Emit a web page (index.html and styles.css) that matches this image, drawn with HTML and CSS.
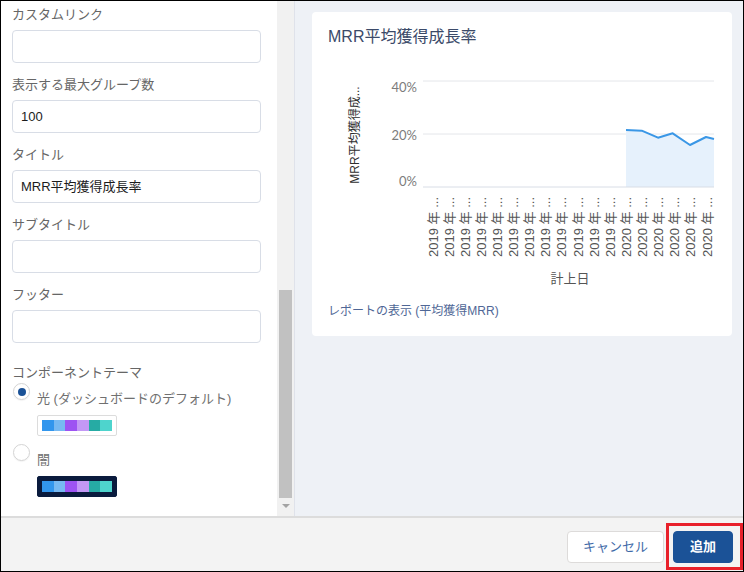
FILE: index.html
```html
<!DOCTYPE html>
<html lang="ja">
<head>
    <meta charset="UTF-8">
    <title>コンポーネントの編集</title>
    <link rel="stylesheet" href="styles.css">
</head>
<body>
<div class="frame">
    <div class="body">
        <div class="form">
            <div class="field">
                <div class="label">カスタムリンク</div>
                <div class="input"></div>
            </div>
            <div class="field">
                <div class="label">表示する最大グループ数</div>
                <div class="input">100</div>
            </div>
            <div class="field">
                <div class="label">タイトル</div>
                <div class="input">MRR平均獲得成長率</div>
            </div>
            <div class="field">
                <div class="label">サブタイトル</div>
                <div class="input"></div>
            </div>
            <div class="field">
                <div class="label">フッター</div>
                <div class="input"></div>
            </div>

            <div class="theme">
                <div class="label">コンポーネントテーマ</div>
                <div class="option">
                    <span class="radio checked"></span>
                    <div class="opt-body">
                        <div class="opt-name">光 (ダッシュボードのデフォルト)</div>
                        <div class="palette">
                            <span class="c1"></span><span class="c2"></span><span class="c3"></span>
                            <span class="c4"></span><span class="c5"></span><span class="c6"></span>
                        </div>
                    </div>
                </div>
                <div class="option">
                    <span class="radio"></span>
                    <div class="opt-body">
                        <div class="opt-name">闇</div>
                        <div class="palette dark">
                            <span class="c1"></span><span class="c2"></span><span class="c3"></span>
                            <span class="c4"></span><span class="c5"></span><span class="c6"></span>
                        </div>
                    </div>
                </div>
            </div>
        </div>

        <div class="scrollbar">
            <div class="thumb"></div>
            <div class="arrow"></div>
        </div>

        <div class="preview">
            <div class="card">
                <div class="card-title">MRR平均獲得成長率</div>
                <svg class="chart" width="420" height="240" viewBox="0 0 420 240">
                    <!-- grid -->
                    <line x1="111" y1="26" x2="402" y2="26" stroke="#e4e6ea"/>
                    <line x1="111" y1="79" x2="402" y2="79" stroke="#e4e6ea"/>

                    <!-- area -->
                    <polygon points="314,75 329.7,75.7 346,82.7 360.7,78.3 378,90 394,82 402,84 402,132 314,132" fill="#e6f1fc"/>
                    <polyline points="314,75 329.7,75.7 346,82.7 360.7,78.3 378,90 394,82 402,84" fill="none" stroke="#3a97e6" stroke-width="2" stroke-linejoin="round"/>

                    <line x1="111" y1="132" x2="402" y2="132" stroke="#d8dde6"/>

                    <g class="y-labels">
                        <text x="105" y="37">40%</text>
                        <text x="105" y="85">20%</text>
                        <text x="105" y="131">0%</text>
                    </g>
                    <text class="y-title" transform="translate(43,80) rotate(-90)">MRR平均獲得成...</text>

                    <g class="x-labels" id="xLabels"></g>
                    <text class="x-title" x="258" y="228">計上日</text>
                </svg>
                <div class="card-link">レポートの表示 (平均獲得MRR)</div>
            </div>
        </div>
    </div>

    <div class="footer">
        <div class="btn cancel">キャンセル</div>
        <div class="mark">
            <div class="btn add">追加</div>
        </div>
    </div>
</div>

<script>
    // x軸ラベル
    const group = document.querySelector('#xLabels');
    for (let i = 0; i < 18; i++) {
        const x = 121 + 16.12 * i;
        const year = i < 12 ? '2019' : '2020';
        const t = document.createElementNS('http://www.w3.org/2000/svg', 'text');
        t.setAttribute('transform', 'translate(' + x + ',142) rotate(-90)');
        t.textContent = year + ' 年 ...';
        group.appendChild(t);
    }
</script>
</body>
</html>
```

FILE: styles.css
```css
* {
    box-sizing: border-box;
}

body {
    margin: 0;
    font-family: "Liberation Sans", "Noto Sans CJK JP", sans-serif;
    background-color: #fff;
}

.frame {
    width: 744px;
    height: 572px;
    border: 1px solid #000;
    display: flex;
    flex-direction: column;
    overflow: hidden;
}

.body {
    display: flex;
    height: 515px;
}

/* 左側フォーム */
.form {
    width: 276px;
    padding: 5px 16px 0 11px;
    background-color: #fff;
    overflow: hidden;
}

.label {
    font-size: 13px;
    line-height: 18px;
    color: #666;
}

.field {
    margin-bottom: 13px;
}

.input {
    margin-top: 6px;
    height: 33px;
    width: 249px;
    border: 1px solid #d8dde6;
    border-radius: 4px;
    padding: 0 8px;
    font-size: 13px;
    line-height: 31px;
    color: #1c1c1c;
}

.theme {
    margin-top: 21px;
}

.option {
    display: flex;
    margin-top: 0;
}

.option + .option {
    margin-top: 7px;
}

.radio {
    flex: none;
    width: 17px;
    height: 17px;
    border: 1px solid #d4d4d4;
    border-radius: 50%;
    margin-left: 1px;
    margin-top: 1px;
    display: flex;
    align-items: center;
    justify-content: center;
    box-shadow: 0 1px 1px rgba(0, 0, 0, .05);
}

.radio.checked::after {
    content: "";
    width: 8px;
    height: 8px;
    border-radius: 50%;
    background-color: #1b5297;
}

.opt-body {
    margin-left: 7px;
    padding-top: 8px;
}

.opt-name {
    font-size: 13px;
    line-height: 18px;
    color: #707070;
}

.palette {
    margin-top: 7px;
    width: 80px;
    height: 21px;
    padding: 4px;
    border: 1px solid #dcdcdc;
    border-radius: 2px;
    display: flex;
}

.palette.dark {
    background-color: #0a1b3d;
    border-color: #0a1b3d;
}

.palette span {
    flex: 1;
}

.palette .c1 { background-color: #3296ed; }
.palette .c2 { background-color: #77b9f2; }
.palette .c3 { background-color: #9d53f2; }
.palette .c4 { background-color: #c398f5; }
.palette .c5 { background-color: #26aba4; }
.palette .c6 { background-color: #4ed4cd; }

/* スクロールバー */
.scrollbar {
    width: 17px;
    background-color: #f1f1f1;
    display: flex;
    flex-direction: column;
    align-items: center;
}

.thumb {
    margin-top: 289px;
    width: 13px;
    height: 208px;
    background-color: #c1c1c1;
}

.arrow {
    margin-top: 6px;
    width: 0;
    height: 0;
    border-left: 4px solid transparent;
    border-right: 4px solid transparent;
    border-top: 4px solid #a3a3a3;
}

/* プレビュー */
.preview {
    flex: 1;
    background-color: #eef1f6;
    border-left: 1px solid #dfe2ea;
    padding: 11px 10px 0 17px;
}

.card {
    width: 420px;
    height: 324px;
    background-color: #fff;
    border-radius: 4px;
    padding-top: 15px;
}

.card-title {
    padding-left: 16px;
    font-size: 16px;
    line-height: 20px;
    color: #3b4a69;
}

.chart {
    display: block;
    margin-top: 8px;
}

.y-labels text {
    font-family: Lato, "Liberation Sans", sans-serif;
    font-size: 13px;
    fill: #7c7c7c;
    text-anchor: end;
}

.y-title {
    font-size: 12px;
    fill: #2e2e2e;
    text-anchor: middle;
    dominant-baseline: central;
}

.x-labels text {
    font-size: 13px;
    fill: #555;
    text-anchor: end;
    dominant-baseline: central;
}

.x-title {
    font-size: 13px;
    fill: #555;
    text-anchor: middle;
}

.card-link {
    margin-top: 7px;
    padding-left: 16px;
    font-size: 12px;
    line-height: 18px;
    color: #4f6796;
}

/* フッター */
.footer {
    flex: 1;
    background-color: #f3f3f3;
    border-top: 2px solid #dcdcdc;
    display: flex;
    justify-content: flex-end;
    align-items: flex-start;
    padding: 13px 10px 0 0;
}

.btn {
    height: 32px;
    border-radius: 4px;
    font-size: 13px;
    line-height: 30px;
    text-align: center;
}

.cancel {
    width: 97px;
    background-color: #fff;
    border: 1px solid #dddbda;
    color: #3f6aa8;
}

.mark {
    position: relative;
    margin-left: 9px;
}

.mark::after {
    content: "";
    position: absolute;
    left: -7px;
    top: -8px;
    right: -10px;
    bottom: -7px;
    border: 3px solid #e8202a;
}

.add {
    width: 60px;
    background-color: #1b5297;
    border: 1px solid #1b5297;
    color: #fff;
    font-weight: bold;
}
```
